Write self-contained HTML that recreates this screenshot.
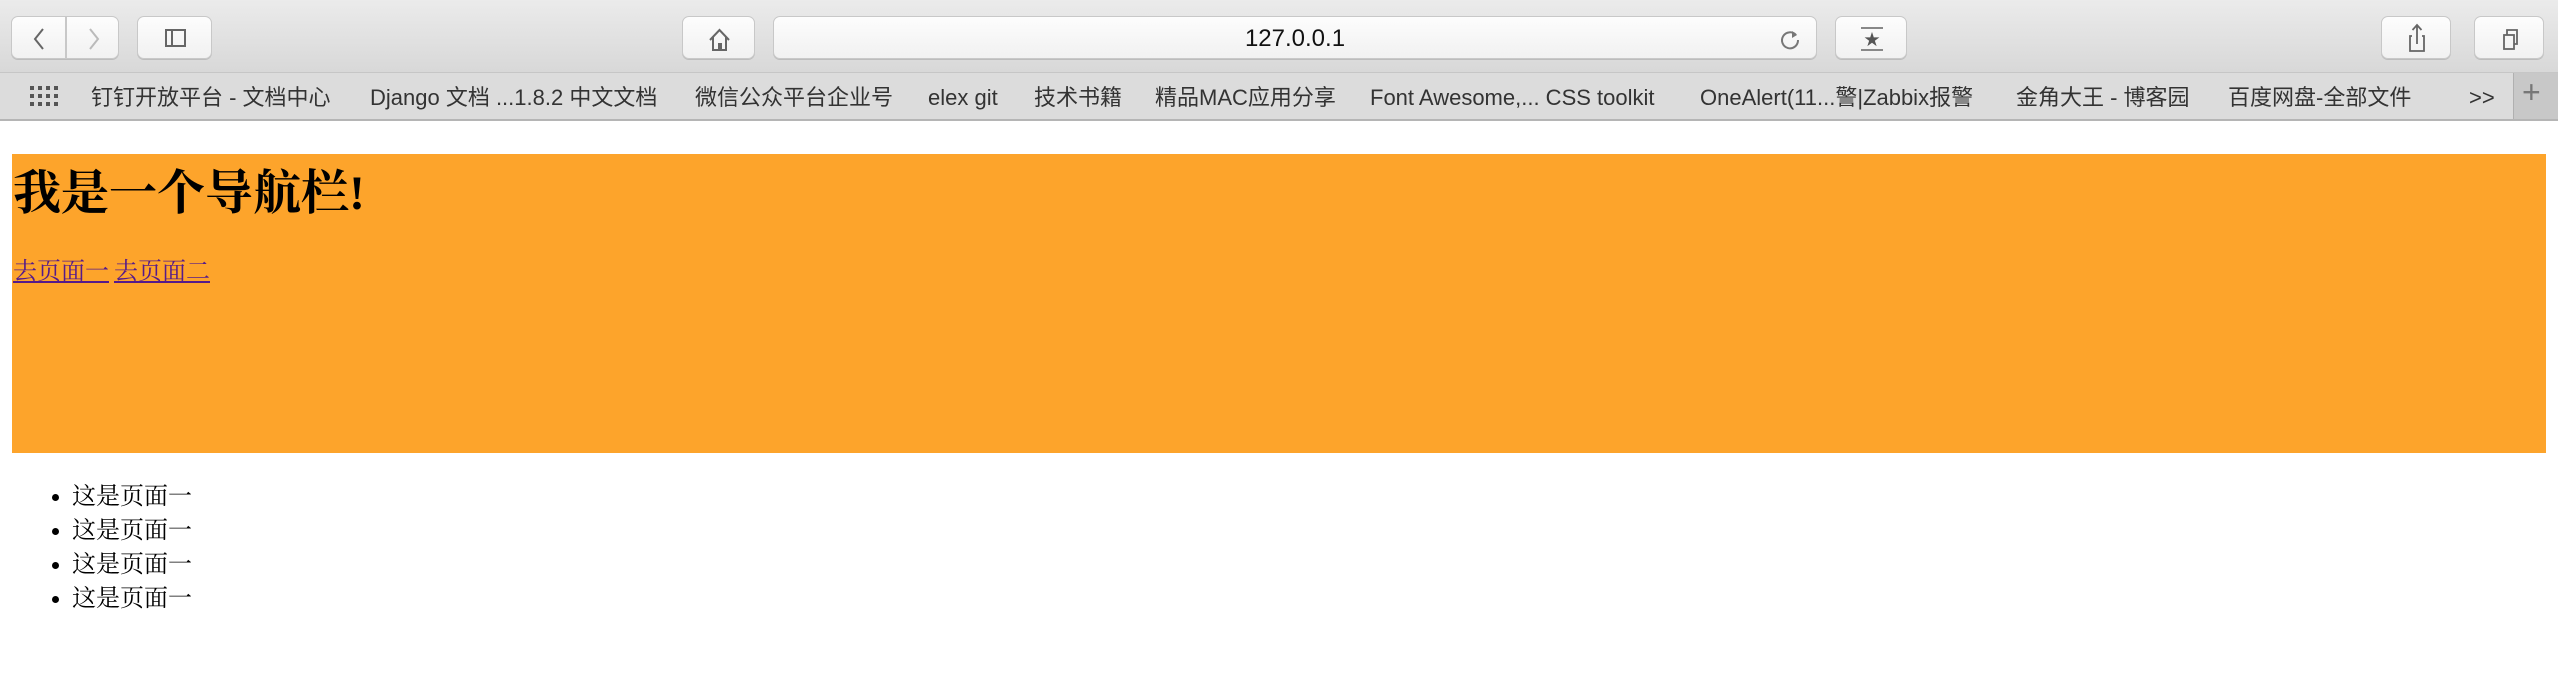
<!DOCTYPE html>
<html><head><meta charset="utf-8"><style>
*{margin:0;padding:0;box-sizing:border-box}
body{width:2558px;height:674px;background:#fff;position:relative;overflow:hidden;font-family:"Liberation Serif","Noto Serif CJK SC",serif}
#tb{position:absolute;left:0;top:0;width:2558px;height:73px;background:linear-gradient(#ebebeb,#d8d8d8);border-bottom:1px solid #c6c6c6}
.btn{position:absolute;top:16px;height:43px;background:linear-gradient(#fdfdfd,#f1f1f1);border:1px solid #c8c8c8;border-radius:7px;box-shadow:0 1px 0 #bcbcbc}
#bm{position:absolute;left:0;top:73px;width:2558px;height:48px;background:#dcdcdc;border-bottom:2px solid #b5b5b5;font-family:"Liberation Sans","Noto Sans CJK SC",sans-serif;font-size:22px;color:#333}
#bm span{position:absolute;top:12px;height:26px;line-height:26px;white-space:nowrap}
#nav{position:absolute;left:12px;top:154px;width:2534px;height:299px;background:#fda42b}
h1{position:absolute;left:13px;top:166px;font-size:48px;font-weight:bold;line-height:56px}
.lk{position:absolute;top:256px;font-size:24px;color:#551a8b;text-decoration:underline;line-height:32px}
ul{position:absolute;left:72px;top:480px;font-size:24px;line-height:34px}
</style></head><body>
<div id="tb">
<div class="btn" style="left:11px;width:55px;border-radius:7px 0 0 7px"><svg width="55" height="43"><path d="M31 12 L23 22 L31 32" stroke="#666" stroke-width="2" fill="none"/></svg></div>
<div class="btn" style="left:66px;width:53px;border-radius:0 7px 7px 0"><svg width="53" height="43"><path d="M23 12 L31 22 L23 32" stroke="#bbb" stroke-width="2" fill="none"/></svg></div>
<div class="btn" style="left:137px;width:75px"><svg width="75" height="43"><rect x="28" y="13" width="19" height="16" fill="none" stroke="#666" stroke-width="2"/><line x1="34" y1="13" x2="34" y2="29" stroke="#666" stroke-width="2"/></svg></div>
<div class="btn" style="left:682px;width:73px"><svg width="73" height="43"><path d="M27 23 L36.5 13 L46 23 M30 20 V33 H43 V20" stroke="#666" stroke-width="2" fill="none"/><rect x="35" y="26" width="4" height="7" fill="#666"/></svg></div>
<div class="btn" style="left:773px;width:1044px;font-family:'Liberation Sans',sans-serif;font-size:24px;color:#111;text-align:center;line-height:44px">127.0.0.1<svg style="position:absolute;right:14px;top:10px" width="24" height="24"><path d="M18 8 A8 8 0 1 0 20 13" stroke="#777" stroke-width="2" fill="none"/><path d="M14 4 L19 8 L14 11" fill="#777"/></svg></div>
<div class="btn" style="left:1835px;width:72px"><svg width="72" height="43"><line x1="25" y1="11" x2="47" y2="11" stroke="#888" stroke-width="2"/><line x1="25" y1="33" x2="47" y2="33" stroke="#888" stroke-width="2"/><text x="36" y="28" font-size="16" text-anchor="middle" fill="#555">★</text></svg></div>
<div class="btn" style="left:2381px;width:70px"><svg width="70" height="43"><path d="M30 19 H28 V34 H42 V19 H40 M35 27 V9 M30.5 13 L35 8 L39.5 13" stroke="#666" stroke-width="1.8" fill="none"/></svg></div>
<div class="btn" style="left:2474px;width:70px"><svg width="70" height="43"><rect x="29" y="18" width="10" height="14" fill="none" stroke="#666" stroke-width="1.8"/><path d="M32 18 V13 H42 V27 H39" stroke="#666" stroke-width="1.8" fill="none"/></svg></div>
</div>
<div id="bm">
<svg style="position:absolute;left:30px;top:13px" width="30" height="22" fill="#555"><g id="r"><rect x="0" y="0" width="4" height="4"/><rect x="8" y="0" width="4" height="4"/><rect x="16" y="0" width="4" height="4"/><rect x="24" y="0" width="4" height="4"/></g><use href="#r" y="8"/><use href="#r" y="16"/></svg>
<span style="left:91px">钉钉开放平台 - 文档中心</span>
<span style="left:370px">Django 文档 ...1.8.2 中文文档</span>
<span style="left:695px">微信公众平台企业号</span>
<span style="left:928px">elex git</span>
<span style="left:1034px">技术书籍</span>
<span style="left:1155px">精品MAC应用分享</span>
<span style="left:1370px">Font Awesome,... CSS toolkit</span>
<span style="left:1700px">OneAlert(11...警|Zabbix报警</span>
<span style="left:2016px">金角大王 - 博客园</span>
<span style="left:2228px">百度网盘-全部文件</span>
<span style="left:2469px">&gt;&gt;</span>
<div style="position:absolute;left:2513px;top:0;width:45px;height:46px;background:#c8c8c8;border-left:1px solid #b0b0b0"></div>
<span style="left:2522px;top:6px;font-size:32px;color:#777">+</span>
</div>
<div id="nav"></div>
<h1>我是一个导航栏!</h1>
<a class="lk" style="left:13px">去页面一</a>
<a class="lk" style="left:114px">去页面二</a>
<ul><li>这是页面一</li><li>这是页面一</li><li>这是页面一</li><li>这是页面一</li></ul>
</body></html>
